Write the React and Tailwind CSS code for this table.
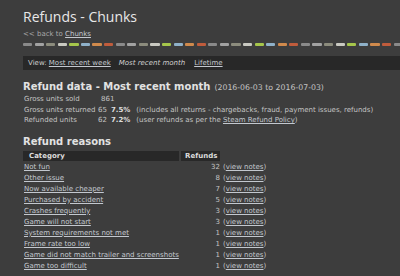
import React from "react";

const DASH_COLORS = ["#8a8a8a", "#a2a2a2", "#8c8c7d", "#c9c9c1", "#a6c64b", "#8fb1c9", "#d08a4c", "#c05c3c"];

const reasons = [
  ["Not fun", 32],
  ["Other issue", 8],
  ["Now available cheaper", 7],
  ["Purchased by accident", 5],
  ["Crashes frequently", 3],
  ["Game will not start", 3],
  ["System requirements not met", 1],
  ["Frame rate too low", 1],
  ["Game did not match trailer and screenshots", 1],
  ["Game too difficult", 1],
];

const Link = ({ children, className = "" }) => (
  <a href="#" className={`text-[#c3c8cf] underline underline-offset-[1px] ${className}`}>
    {children}
  </a>
);

const StatRow = ({ label, children }) => (
  <div className="flex items-center h-[10.5px] whitespace-nowrap">
    <div className="w-[75px] shrink-0 pl-[1px]">{label}</div>
    <div className="flex items-center">{children}</div>
  </div>
);

export default function App() {
  return (
    <div className="min-h-screen bg-[#3d3d3d] pl-[23px] pt-[9px] overflow-hidden font-['DejaVu_Sans',sans-serif] text-[7px] text-[#c4c4c4]">
      <h1 className="h-[16px] leading-[16px] font-['Open_Sans',sans-serif] text-[14px] text-[#e8e8e8]">
        Refunds - Chunks
      </h1>
      <div className="mt-[4px] h-[10px] leading-[10px] text-[#a8a8a8]">
        &lt;&lt; back to <Link>Chunks</Link>
      </div>

      <div className="mt-[4px] flex h-[3px] w-[420px] overflow-hidden">
        {Array.from({ length: 40 }).map((_, i) => (
          <div
            key={i}
            className="h-[3px] w-[9.2px] mr-[2.4px] shrink-0 rounded-[1px]"
            style={{ background: DASH_COLORS[i % DASH_COLORS.length] }}
          />
        ))}
      </div>

      <div className="mt-[10px] h-[14px] bg-[#282828] flex items-center pl-[5px] whitespace-nowrap text-[#cfcfcf]">
        <span>View:&nbsp;</span>
        <Link>Most recent week</Link>
        <span className="ml-[8px] italic">Most recent month</span>
        <Link className="ml-[9px]">Lifetime</Link>
      </div>

      <div className="mt-[10px] h-[14px] leading-[14px] whitespace-nowrap">
        <span className="font-bold text-[10px] text-[#e2e2e2]">Refund data - Most recent month</span>
        <span className="ml-[4px] text-[7.8px]">(2016-06-03 to 2016-07-03)</span>
      </div>

      <StatRow label="Gross units sold">
        <span className="ml-[3px]">861</span>
      </StatRow>
      <StatRow label="Gross units returned">
        <span>65</span>
        <b className="ml-[4px] text-[#dedede]">7.5%</b>
        <span className="ml-[6px]">(includes all returns - chargebacks, fraud, payment issues, refunds)</span>
      </StatRow>
      <StatRow label="Refunded units">
        <span>62</span>
        <b className="ml-[4px] text-[#dedede]">7.2%</b>
        <span className="ml-[6px]">
          (user refunds as per the <Link>Steam Refund Policy</Link>)
        </span>
      </StatRow>

      <h2 className="mt-[9px] h-[14px] leading-[14px] font-bold text-[10px] text-[#e2e2e2]">Refund reasons</h2>

      <div className="mt-[2.5px] w-[197px]">
        <div className="flex h-[9.5px] font-bold text-[#dcdcdc]">
          <div className="w-[156px] bg-[#282828] flex items-center pl-[6px]">Category</div>
          <div className="ml-[2px] flex-1 bg-[#282828] flex items-center pl-[4px]">Refunds</div>
        </div>
        <div className="mt-[1px]">
          {reasons.map(([name, count]) => (
            <div key={name} className="flex items-center h-[11px] whitespace-nowrap">
              <div className="w-[158px] pl-[1px]">
                <Link>{name}</Link>
              </div>
              <div className="flex-1 text-right">{count}</div>
              <div className="w-0 overflow-visible">
                <span className="ml-[3px] inline-block">
                  (<Link>view notes</Link>)
                </span>
              </div>
            </div>
          ))}
        </div>
      </div>
    </div>
  );
}
